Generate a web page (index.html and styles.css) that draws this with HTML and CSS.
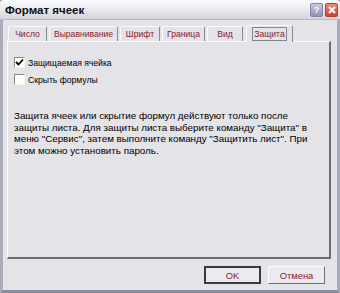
FILE: index.html
```html
<!DOCTYPE html>
<html lang="ru">

<head>
    <meta charset="UTF-8">
    <title>Формат ячеек</title>
    <link rel="stylesheet" href="styles.css">
</head>

<body>

    <div class="window">
        <div class="titlebar">
            <div class="title">Формат ячеек</div>
            <div class="title-buttons">
                <div class="tbtn help">?</div>
                <div class="tbtn close">
                    <svg width="8" height="8" viewBox="0 0 8 8">
                        <path d="M1 1 L7 7 M7 1 L1 7" stroke="#fff" stroke-width="2" />
                    </svg>
                </div>
            </div>
        </div>

        <div class="body">
            <!-- Tabs -->
            <div class="tabs">
                <div class="tab tab-number">Число</div>
                <div class="tab tab-align">Выравнивание</div>
                <div class="tab tab-font">Шрифт</div>
                <div class="tab tab-border">Граница</div>
                <div class="tab tab-view">Вид</div>
                <div class="tab tab-protect selected"><span>Защита</span></div>
            </div>

            <div class="panel">
                <label class="check-row">
                    <span class="checkbox checked">
                        <svg width="9" height="9" viewBox="0 0 9 9">
                            <path d="M1 4 L3.5 6.5 L8 1.5" stroke="#000" stroke-width="1.8" fill="none" />
                        </svg>
                    </span>
                    Защищаемая ячейка
                </label>
                <label class="check-row">
                    <span class="checkbox"></span>
                    Скрыть формулы
                </label>

                <p class="note">
                    Защита ячеек или скрытие формул действуют только после<br>
                    защиты листа. Для защиты листа выберите команду "Защита" в<br>
                    меню "Сервис", затем выполните команду "Защитить лист". При<br>
                    этом можно установить пароль.
                </p>
            </div>

            <div class="buttons">
                <button class="default">OK</button>
                <button>Отмена</button>
            </div>
        </div>
    </div>

</body>

</html>
```

FILE: styles.css
```css
body {
    margin: 0;
    background: #e4e3e8;
    font-family: 'Liberation Sans', Arial, sans-serif;
    font-size: 9.4px;
    color: #000;
}

/* Dialog frame */
.window {
    width: 340px;
    height: 293px;
    box-sizing: border-box;
    border: 3px solid #a9adbb;
    border-top: none;
    border-bottom-color: #8d909c;
    background: #e4e3e8;
    display: flex;
    flex-direction: column;
}

.titlebar {
    height: 19px;
    margin: 0 -3px;
    padding: 0 2px 0 5px;
    display: flex;
    align-items: center;
    justify-content: space-between;
    background: linear-gradient(#fbfbfd, #e9e9ef 50%, #d3d4dd);
    border-bottom: 1px solid #b8bac6;
    border-radius: 4px 4px 0 0;
}

.title {
    font-weight: bold;
    font-size: 11.5px;
    color: #111;
}

.title-buttons {
    display: flex;
    gap: 2px;
}

.tbtn {
    width: 11px;
    height: 12px;
    border-radius: 2px;
    display: flex;
    justify-content: center;
    align-items: center;
    font-weight: bold;
    font-size: 9px;
    color: #fff;
}

.help {
    background: linear-gradient(#c7cbe0, #8d93b4);
    border: 1px solid #7d84a6;
}

.close {
    background: linear-gradient(#f08a7a, #d5402e);
    border: 1px solid #b0402f;
}

.body {
    flex: 1;
    padding: 3px 4px 0 4px;
    display: flex;
    flex-direction: column;
}

/* Tabs */
.tabs {
    display: flex;
    align-items: flex-end;
    padding-left: 1px;
    height: 18px;
}

.tab {
    box-sizing: border-box;
    height: 15px;
    margin-right: 2px;
    display: flex;
    align-items: center;
    justify-content: center;
    font-size: 8.6px;
    color: #8b2030;
    border-top: 1px solid #fafafa;
    border-left: 1px solid #fafafa;
    border-right: 1px solid #8a8a90;
    border-radius: 2px 2px 0 0;
}

.tab-number { width: 39px; }
.tab-align { width: 69px; }
.tab-font { width: 40px; }
.tab-border { width: 43px; }
.tab-view { width: 36px; }
.tab-protect { width: 47px; }

.tab.selected {
    height: 17px;
    margin-bottom: -1px;
    margin-left: 1px;
    background: #e4e3e8;
    position: relative;
    z-index: 1;
}

.tab.selected span {
    border: 1px solid #7b8a90;
    padding: 0 1px;
    line-height: 12px;
}

.panel {
    box-sizing: border-box;
    height: 218px;
    margin-right: 2px;
    border-top: 1px solid #fafafa;
    border-left: 1px solid #fafafa;
    border-right: 2px solid #6d6d72;
    border-bottom: 2px solid #6d6d72;
    padding: 12px 6px 0 6px;
}

.check-row {
    display: flex;
    align-items: center;
    gap: 3px;
    height: 17px;
    font-size: 8.6px;
}

.checkbox {
    width: 9px;
    height: 9px;
    background: #fff;
    border: 1px solid #8a8a8a;
    border-right-color: #f5f5f5;
    border-bottom-color: #f5f5f5;
    display: flex;
    align-items: center;
    justify-content: center;
}

.note {
    margin: 22px 0 0 0;
    line-height: 11.7px;
    font-size: 9.8px;
    white-space: nowrap;
}

/* Buttons */
.buttons {
    display: flex;
    justify-content: flex-end;
    gap: 7px;
    padding: 7px 8px 0 0;
}

button {
    width: 57px;
    height: 18px;
    font-family: 'Liberation Sans', Arial, sans-serif;
    font-size: 9.4px;
    color: #8b2030;
    background: #ebeaef;
    border: 1px solid #fafafa;
    border-right-color: #6d6d72;
    border-bottom-color: #6d6d72;
    padding: 0;
}

button.default {
    border: 2px solid #3a3a3a;
}
```
